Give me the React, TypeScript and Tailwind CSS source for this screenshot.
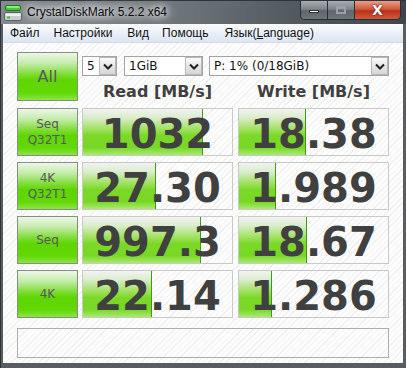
import React from 'react';

type Row = {
  label: string[];
  read: string;
  readFill: number;
  write: string;
  writeFill: number;
};

const rows: Row[] = [
  { label: ['Seq', 'Q32T1'], read: '1032', readFill: 120, write: '18.38', writeFill: 67 },
  { label: ['4K', 'Q32T1'], read: '27.30', readFill: 73, write: '1.989', writeFill: 37 },
  { label: ['Seq'], read: '997.3', readFill: 118, write: '18.67', writeFill: 68 },
  { label: ['4K'], read: '22.14', readFill: 69, write: '1.286', writeFill: 33 },
];

const Chevron = () => (
  <svg width="10" height="7" viewBox="0 0 10 7">
    <path d="M1 1.5 L5 5.5 L9 1.5" fill="none" stroke="#1e1e1e" strokeWidth="2" />
  </svg>
);

const Select: React.FC<{ value: string; width: string }> = ({ value, width }) => (
  <div className={`flex h-[20px] ${width} border border-[#a3a3a3] bg-white`}>
    <span className="flex-1 pl-[4px] text-[12px] leading-[18px] text-[#111] font-['DejaVu_Sans',sans-serif]">
      {value}
    </span>
    <span className="flex h-[18px] w-[17px] items-center justify-center border border-[#b9b9b9] bg-[linear-gradient(to_bottom,#fbfbfb,#e6e6e6_50%,#d6d6d6)]">
      <Chevron />
    </span>
  </div>
);

const greenBtn =
  'border border-[#7f937f] bg-[linear-gradient(to_bottom,#eef6ea_0%,#c4ecaa_22%,#7fdc38_45%,#5ed600_58%,#62d806_85%,#8ee448_100%)] text-[#585858] font-["DejaVu_Sans",sans-serif]';

const ValueCell: React.FC<{ value: string; fill: number }> = ({ value, fill }) => (
  <div className="relative h-[48px] w-[151px] border border-[#c9c9c9]">
    <div
      className="absolute left-0 top-0 bottom-0 border-r border-[#3f9a12] bg-[linear-gradient(to_bottom,#f2f3f1_0%,#dcedd0_18%,#a4e266_42%,#7bd827_58%,#78d824_84%,#aaea70_100%)]"
      style={{ width: fill }}
    />
    <div className="relative flex h-full items-center justify-center pt-[3px] text-[40px] font-bold leading-[46px] text-[#404040] font-['DejaVu_Sans',sans-serif]">
      {value}
    </div>
  </div>
);

const TitleIcon = () => (
  <svg width="18" height="18" viewBox="0 0 18 18">
    <rect x="1.5" y="1.5" width="15" height="5" rx="1.5" fill="#3fcf2c" stroke="#1f7a17" />
    <rect x="2.5" y="2.2" width="13" height="1.6" rx="0.8" fill="#a6f59a" />
    <rect x="0.5" y="8.5" width="17" height="8" rx="1.5" fill="#c9cdd0" stroke="#5b6166" />
    <rect x="1.5" y="9.5" width="15" height="2.5" fill="#eef0f1" />
    <rect x="3" y="12.5" width="3" height="2" fill="#39c12a" />
  </svg>
);

export default function App() {
  return (
    <div className="flex h-[368px] w-[406px] flex-col bg-[#575d62] font-['Liberation_Sans',sans-serif]">
      {/* title bar */}
      <div className="flex h-[24px] shrink-0 items-start border-l border-t border-[#2f3438] bg-[linear-gradient(to_right,#838a90,#6c7379_45%,#50575d_75%,#3f454a)]">
        <div className="ml-[3px] mt-[3px]">
          <TitleIcon />
        </div>
        <span className="ml-[5px] mt-[4px] text-[12px] leading-[15px] text-[#0b0b0b] [text-shadow:0_0_6px_#ffffff,0_0_10px_#ffffff,0_0_14px_#ffffff]">
          CrystalDiskMark 5.2.2 x64
        </span>
        <div className="ml-auto mr-[5px] flex h-[19px] overflow-hidden rounded-b-[5px] border border-t-0 border-[#2a2e32]">
          <div className="flex w-[27px] items-center justify-center border-r border-[#2a2e32] bg-[linear-gradient(to_bottom,#a7adb2,#7d858b_45%,#5d656b_55%,#6f777d)]">
            <div className="mt-[3px] h-[3px] w-[10px] border border-[#333] bg-white" />
          </div>
          <div className="flex w-[27px] items-center justify-center border-r border-[#2a2e32] bg-[linear-gradient(to_bottom,#a7adb2,#7d858b_45%,#5d656b_55%,#6f777d)]">
            <div className="h-[8px] w-[10px] border-2 border-t-[3px] border-[#9aa0a5]" />
          </div>
          <div className="flex w-[45px] items-center justify-center bg-[linear-gradient(to_bottom,#e7a08c,#d0593c_45%,#b8321a_55%,#cf5a3c)]">
            <span className="text-[14px] font-bold leading-[14px] text-white [text-shadow:0_0_1px_#5a1a0a,0_0_2px_#5a1a0a] font-['DejaVu_Sans',sans-serif]">
              X
            </span>
          </div>
        </div>
      </div>

      <div className="flex flex-1 flex-col border-l border-[#2f3438] pl-[2px] pr-[3px] pb-[5px]">
        {/* menu bar */}
        <div className="flex h-[19px] shrink-0 items-center border-b border-[#d3dbe6] bg-[linear-gradient(to_bottom,#fbfcfe,#eaf0f8_50%,#dce5f1)] pl-[7px] text-[12px] text-[#111]">
          <span>Файл</span>
          <span className="ml-[14px]">Настройки</span>
          <span className="ml-[15px]">Вид</span>
          <span className="ml-[13px]">Помощь</span>
          <span className="ml-[16px]">
            Язык(<span className="underline">L</span>anguage)
          </span>
        </div>

        {/* content */}
        <div className="flex flex-1 flex-col gap-[6px] bg-[repeating-linear-gradient(135deg,#ffffff_0px,#ffffff_3px,#efefef_3px,#efefef_4px)] pl-[14px] pt-[9px]">
          <div className="flex gap-[4px]">
            <div className={`flex h-[49px] w-[61px] items-center justify-center text-[16px] ${greenBtn}`}>All</div>
            <div className="flex flex-col pt-[4px]">
              <div className="flex">
                <Select value="5" width="w-[35px]" />
                <div className="ml-[7px]">
                  <Select value="1GiB" width="w-[79px]" />
                </div>
                <div className="ml-[6px]">
                  <Select value="P: 1% (0/18GiB)" width="w-[180px]" />
                </div>
              </div>
              <div className="flex gap-[5px] pt-[6px] text-[16px] font-bold leading-[20px] text-[#404040] font-['DejaVu_Sans',sans-serif]">
                <div className="w-[151px] text-center">Read [MB/s]</div>
                <div className="w-[151px] text-center">Write [MB/s]</div>
              </div>
            </div>
          </div>

          {rows.map((r) => (
            <div key={r.read} className="flex">
              <div className={`flex h-[48px] w-[61px] flex-col items-center justify-center text-[12px] leading-[16px] ${greenBtn}`}>
                {r.label.map((l) => (
                  <span key={l}>{l}</span>
                ))}
              </div>
              <div className="ml-[4px]">
                <ValueCell value={r.read} fill={r.readFill} />
              </div>
              <div className="ml-[5px]">
                <ValueCell value={r.write} fill={r.writeFill} />
              </div>
            </div>
          ))}

          <div className="mt-[4px] h-[30px] w-[372px] border border-[#aeaeae]" />
        </div>
      </div>
    </div>
  );
}
